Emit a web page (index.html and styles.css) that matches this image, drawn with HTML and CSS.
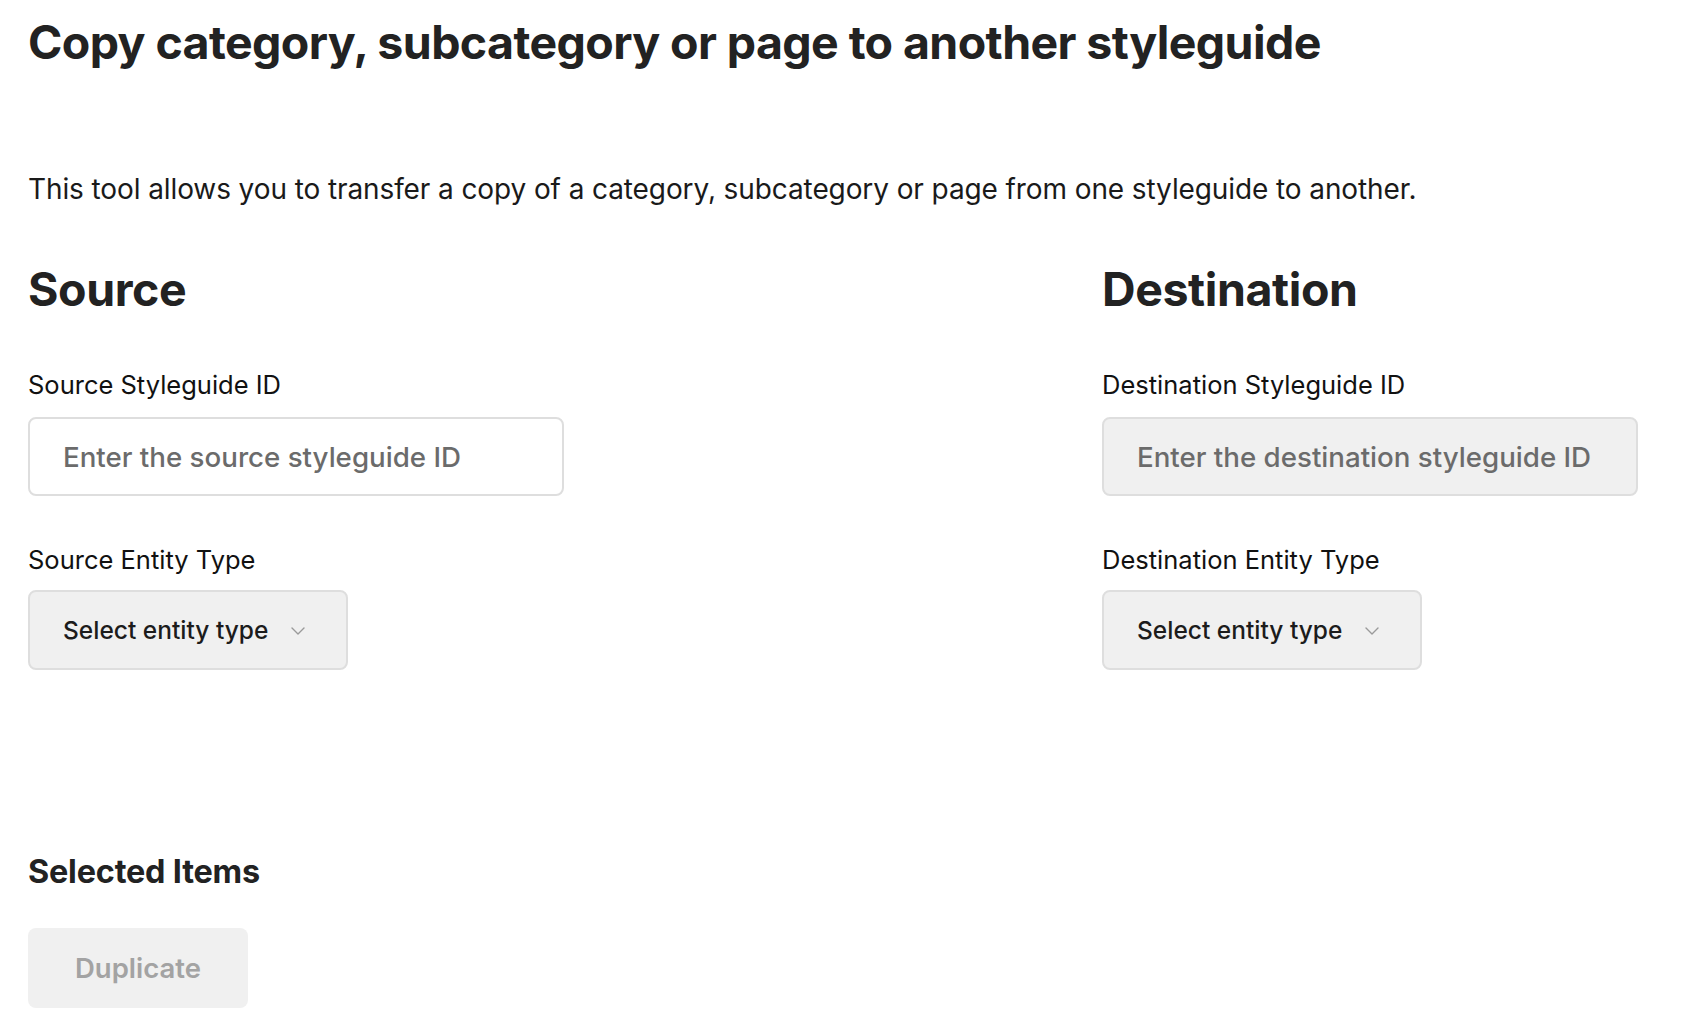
FILE: index.html
```html
<!DOCTYPE html>
<html lang="en">
<head>
<meta charset="utf-8">
<title>Copy category</title>
<link rel="stylesheet" href="styles.css">
</head>
<body>
<main class="page">
  <h1 class="title">Copy category, subcategory or page to another styleguide</h1>
  <p class="intro">This tool allows you to transfer a copy of a category, subcategory or page from one styleguide to another.</p>
  <div class="columns">
    <section class="col">
      <h2 class="col-title">Source</h2>
      <label class="field-label" for="src-id">Source Styleguide ID</label>
      <input class="text-input" id="src-id" type="text" placeholder="Enter the source styleguide ID">
      <div class="field-label second">Source Entity Type</div>
      <button class="select" type="button">
        <span>Select entity type</span>
        <svg class="chev" width="14" height="8" viewBox="0 0 14 8"><path d="M1 1l6 6 6-6" fill="none" stroke="#9a9a9a" stroke-width="1.4" stroke-linecap="round" stroke-linejoin="round"/></svg>
      </button>
    </section>
    <section class="col">
      <h2 class="col-title">Destination</h2>
      <label class="field-label" for="dst-id">Destination Styleguide ID</label>
      <input class="text-input disabled" id="dst-id" type="text" placeholder="Enter the destination styleguide ID" disabled>
      <div class="field-label second">Destination Entity Type</div>
      <button class="select" type="button">
        <span>Select entity type</span>
        <svg class="chev" width="14" height="8" viewBox="0 0 14 8"><path d="M1 1l6 6 6-6" fill="none" stroke="#9a9a9a" stroke-width="1.4" stroke-linecap="round" stroke-linejoin="round"/></svg>
      </button>
    </section>
  </div>
  <h3 class="selected-title">Selected Items</h3>
  <button class="dup-btn" type="button" disabled>Duplicate</button>
</main>
</body>
</html>
```

FILE: styles.css
```css
* { box-sizing: border-box; }

html, body {
  margin: 0;
  padding: 0;
  background: #ffffff;
}

body {
  font-family: Inter, "Noto Sans", "Liberation Sans", sans-serif;
  color: #1f1f1f;
}

.page {
  padding: 15px 48px 0 28px;
}

.title {
  margin: 0;
  font-size: 46.5px;
  line-height: 54px;
  font-weight: 700;
  letter-spacing: -0.6px;
  color: #222222;
}

.intro {
  margin: 102px 0 0;
  font-size: 28px;
  line-height: 36px;
  font-weight: 400;
  letter-spacing: -0.1px;
  color: #1a1a1a;
}

.columns {
  display: flex;
  justify-content: space-between;
  margin-top: 53px;
}

.col {
  width: 536px;
  display: flex;
  flex-direction: column;
  align-items: flex-start;
}

.col-title {
  margin: 0;
  font-size: 46.5px;
  line-height: 58px;
  font-weight: 700;
  letter-spacing: -0.4px;
  color: #222222;
}

.field-label {
  display: block;
  margin-top: 51px;
  font-size: 25.5px;
  line-height: 32px;
  color: #111111;
}

.field-label.second {
  margin-top: 48px;
}

.text-input {
  margin-top: 16px;
  width: 536px;
  height: 79px;
  padding: 0 20px 0 33px;
  border: 2px solid #dedede;
  border-radius: 8px;
  background: #ffffff;
  font-family: inherit;
  font-size: 27.7px;
  font-weight: 500;
  color: #222;
  outline: none;
}

.text-input::placeholder {
  color: #6b6b6b;
  opacity: 1;
}

.text-input.disabled {
  background: #f0f0f0;
}

.select {
  margin-top: 14px;
  width: 320px;
  height: 80px;
  padding: 0 0 0 33px;
  display: flex;
  align-items: center;
  gap: 23px;
  border: 2px solid #dedede;
  border-radius: 8px;
  background: #f0f0f0;
  font-family: inherit;
  font-size: 24.5px;
  font-weight: 500;
  color: #1c1c1c;
  cursor: pointer;
}

.chev {
  display: block;
  flex: none;
  margin-top: 2px;
}

.selected-title {
  margin: 182px 0 0;
  font-size: 32.4px;
  line-height: 40px;
  font-weight: 700;
  letter-spacing: -0.2px;
  color: #222222;
}

.dup-btn {
  margin-top: 36px;
  width: 220px;
  height: 80px;
  border: none;
  border-radius: 8px;
  background: #f0f0f0;
  font-family: inherit;
  font-size: 27.5px;
  font-weight: 600;
  color: #a3a3a3;
}
```
